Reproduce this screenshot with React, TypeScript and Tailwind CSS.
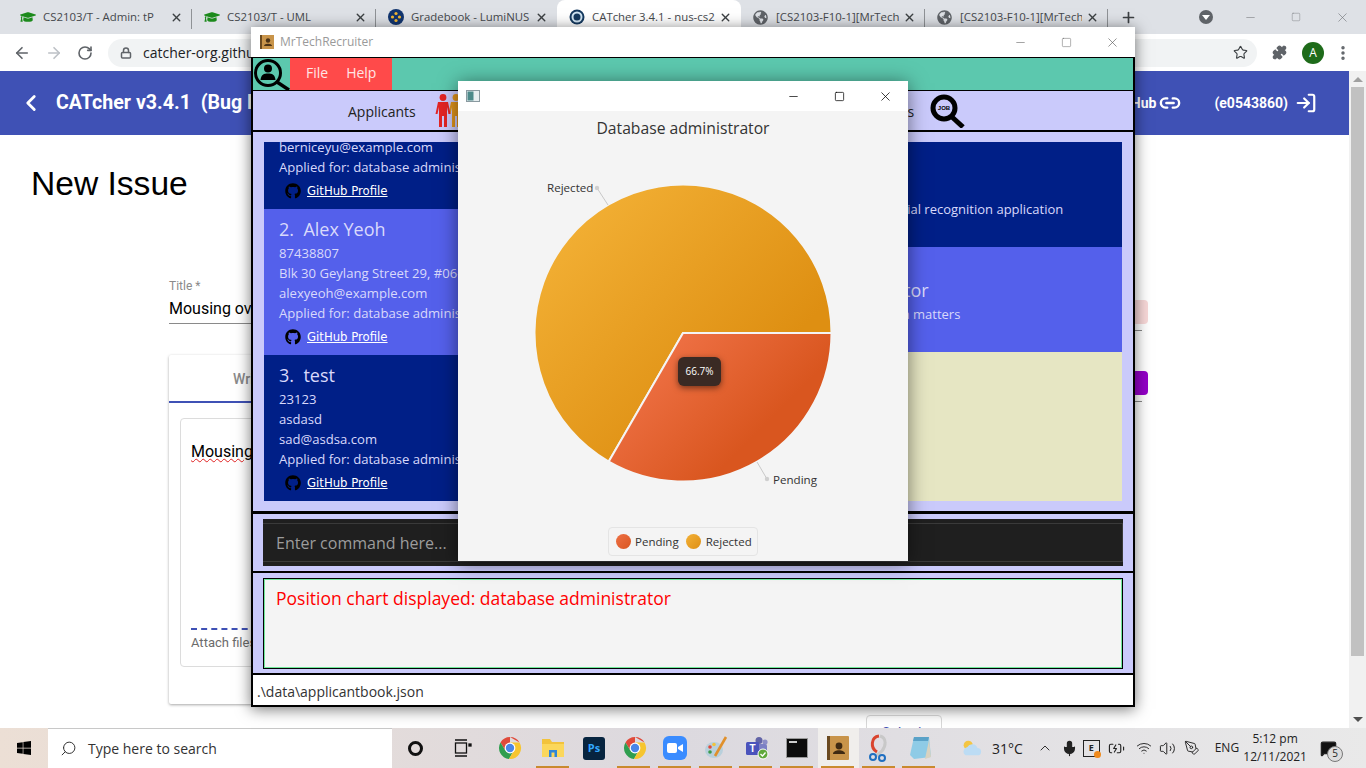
import { ArrowLeft, ArrowRight, RotateCw, Lock, Star, Puzzle, X, Plus, Minus, Square, ChevronLeft, Link2, LogIn, Search, EllipsisVertical, ChevronUp, Mic, Volume2, Wifi, PenTool, BatteryCharging, MessageSquare } from 'lucide-react';
import { FaGithub, FaGraduationCap, FaGlobeAmericas, FaWindows } from 'react-icons/fa';

const segoe = { fontFamily: '"Open Sans", "Noto Sans", sans-serif' };

const tabs = [
  { title: 'CS2103/T - Admin: tP', icon: 'grad', w: 'w-[184px]', sep: true },
  { title: 'CS2103/T - UML', icon: 'grad', w: 'w-[184px]', sep: true },
  { title: 'Gradebook - LumiNUS', icon: 'nus', w: 'w-[181px]', sep: false },
  { title: 'CATcher 3.4.1 - nus-cs2', icon: 'cat', w: 'w-[184px]', active: true, sep: false },
  { title: '[CS2103-F10-1][MrTech', icon: 'globe', w: 'w-[184px]', sep: true },
  { title: '[CS2103-F10-1][MrTech', icon: 'globe', w: 'w-[183px]', sep: true },
];

function TabIcon({ kind }: { kind: string }) {
  if (kind === 'grad') return <FaGraduationCap className="h-[16px] w-[16px] text-[#1c8a1c]" />;
  if (kind === 'globe') return <FaGlobeAmericas className="h-[15px] w-[15px] text-[#5f6368]" />;
  if (kind === 'nus')
    return (
      <svg viewBox="0 0 16 16" className="h-[16px] w-[16px]">
        <circle cx="8" cy="8" r="8" fill="#12356f" />
        <circle cx="8" cy="4.5" r="1.6" fill="#f2b632" />
        <circle cx="4.5" cy="8" r="1.6" fill="#f2b632" />
        <circle cx="11.5" cy="8" r="1.6" fill="#f2b632" />
        <circle cx="8" cy="11.5" r="1.6" fill="#f2b632" />
      </svg>
    );
  return (
    <svg viewBox="0 0 16 16" className="h-[16px] w-[16px]">
      <circle cx="8" cy="8" r="7.5" fill="#14395f" />
      <circle cx="8" cy="8" r="4.5" fill="none" stroke="#cfe3f2" strokeWidth="2" />
    </svg>
  );
}

function ChromeTabs() {
  return (
    <div className="flex h-[34px] items-end bg-[#dee1e6] pl-[8px] text-[11.4px] text-[#45484c]" style={segoe}>
      {tabs.map((t, i) => (
        <div
          key={i}
          className={`relative flex h-[34px] shrink-0 items-center pl-[11px] pr-[9px] ${t.w} ${t.active ? 'rounded-t-[8px] bg-white' : ''}`}
        >
          <span className="flex w-[17px] justify-center">
            <TabIcon kind={t.icon} />
          </span>
          <span className="ml-[7px] flex-1 overflow-hidden whitespace-nowrap">{t.title}</span>
          <X className="ml-[4px] h-[13px] w-[13px] shrink-0 text-[#3c4043]" strokeWidth={2.6} />
          {t.sep && <span className="absolute right-0 top-[9px] h-[20px] w-px bg-[#8f9296]" />}
        </div>
      ))}
      <div className="flex h-[34px] w-[40px] shrink-0 items-center justify-center">
        <Plus className="h-[17px] w-[17px] text-[#3c4043]" strokeWidth={2.4} />
      </div>
      <div className="ml-[48px] flex h-[34px] w-[20px] shrink-0 items-center justify-center">
        <span className="flex h-[14px] w-[14px] items-center justify-center rounded-full bg-[#5f6368]">
          <span className="h-0 w-0 border-x-[4px] border-t-[5px] border-x-transparent border-t-white" />
        </span>
      </div>
      <div className="ml-[11px] flex h-[34px] shrink-0 items-center text-[#6f7276]">
        <span className="flex w-[46px] justify-center"><Minus className="h-[13px] w-[13px]" strokeWidth={1} /></span>
        <span className="flex w-[46px] justify-center"><Square className="h-[10px] w-[10px]" strokeWidth={1} /></span>
        <span className="flex w-[46px] justify-center"><X className="h-[15px] w-[15px]" strokeWidth={1} /></span>
      </div>
    </div>
  );
}

function ChromeToolbar() {
  return (
    <div className="flex h-[37px] items-center bg-white" style={segoe}>
      <div className="flex w-[108px] items-center pl-[13px] text-[#5f6368]">
        <ArrowLeft className="h-[18px] w-[18px]" strokeWidth={2.2} />
        <ArrowRight className="ml-[14px] h-[18px] w-[18px] text-[#bdc1c6]" strokeWidth={2.2} />
        <RotateCw className="ml-[14px] h-[16px] w-[16px]" strokeWidth={2.4} />
      </div>
      <div className="flex h-[28px] w-[1149px] items-center rounded-full bg-[#f1f3f4] pl-[12px] pr-[9px] text-[14px] text-[#202124]">
        <Lock className="h-[12px] w-[12px] text-[#5f6368]" strokeWidth={3} />
        <span className="ml-[11px] flex-1">catcher-org.github.io</span>
        <Star className="h-[15px] w-[15px] text-[#3c4043]" strokeWidth={1.8} />
      </div>
      <Puzzle className="ml-[15px] h-[15px] w-[15px] fill-[#5f6368] text-[#5f6368]" />
      <span className="ml-[15px] flex h-[22px] w-[22px] items-center justify-center rounded-full bg-[#1e6b1a] text-[12px] text-white">A</span>
      <EllipsisVertical className="ml-[10px] h-[18px] w-[18px] text-[#5f6368]" strokeWidth={2.6} />
    </div>
  );
}

function PageBehind() {
  return (
    <div className="flex h-[657px] overflow-hidden bg-white">
      <div className="w-[1349px]" style={{ fontFamily: 'Roboto, sans-serif' }}>
        <header className="flex h-[64px] items-center bg-[#3f51b5] pl-[18px] text-white">
          <ChevronLeft className="h-[26px] w-[26px]" strokeWidth={2.6} />
          <span className="ml-[12px] text-[19.6px] font-bold">CATcher v3.4.1&nbsp; (Bug Reporting Phase)</span>
          <span className="ml-auto text-[14px] font-bold">GitHub</span>
          <Link2 className="ml-[3px] h-[22px] w-[22px]" strokeWidth={2.6} />
          <span className="ml-[33px] text-[14px] font-bold">(e0543860)</span>
          <LogIn className="ml-[7px] mr-[32px] h-[22px] w-[22px]" strokeWidth={2.4} />
        </header>
        <h1 className="ml-[31px] mt-[29px] text-[33.6px] leading-[40px] text-black" style={{ fontFamily: '"Liberation Sans", sans-serif' }}>New Issue</h1>
        <div className="ml-[169px] mt-[75px] flex w-[979px] justify-between">
          <div className="w-[800px]">
            <div className="text-[12px] leading-[14px] text-[#8a8a8a]">Title *</div>
            <div className="mt-[6px] h-[25px] border-b border-[#8a8a8a] text-[16px] leading-[20px] text-black">Mousing over the issue</div>
            <div className="mt-[31px] h-[349px] rounded-[2px] shadow-[0_1px_3px_rgba(0,0,0,0.35)]">
              <div className="h-[48px] w-[150px] border-b-2 border-[#3f51b5] pl-[64px] pt-[14px] text-[14px] font-medium text-[#8a8a8a]">Write</div>
              <div className="mx-[11px] mt-[15px] h-[249px] rounded-[4px] border border-[#dcdcdc] px-[10px] pt-[23px]">
                <div className="text-[16px] leading-[20px] text-black underline decoration-wavy decoration-[#e02020] decoration-1">Mousing</div>
                <div className="mt-[166px] w-[300px] border-b-2 border-dashed border-[#3f51b5]" />
                <div className="mt-[5px] text-[13px] leading-[16px] text-[#6b6b6b]">Attach files</div>
              </div>
            </div>
            <div className="ml-[697px] mt-[11px] h-[40px] w-[76px] rounded-[4px] border border-[#d8d8d8] pt-[7px] text-center text-[14px] text-[#3f51b5]">Submit</div>
          </div>
          <div className="w-[80px] pt-[7px]">
            <div className="h-[14px]" />
            <div className="ml-auto h-[24px] w-[60px] rounded-[4px] bg-[#f8d8d8]" />
            <div className="mt-[6px] h-px w-[74px] bg-[#8a8a8a]" />
            <div className="mt-[40px] ml-auto h-[24px] w-[60px] rounded-[4px] bg-[#9400c8]" />
            <div className="mt-[6px] h-px w-[74px] bg-[#8a8a8a]" />
          </div>
        </div>
      </div>
      <div className="relative w-[17px] bg-[#f1f1f1]">
        <span className="absolute left-[4px] top-[6px] h-0 w-0 border-x-[5px] border-b-[5px] border-x-transparent border-b-[#a0a0a0]" />
        <div className="ml-[2px] mt-[16px] h-[569px] w-[13px] bg-[#c1c1c1]" />
        <span className="absolute bottom-[6px] left-[4px] h-0 w-0 border-x-[5px] border-t-[5px] border-x-transparent border-t-[#505050]" />
      </div>
    </div>
  );
}

function LogoIcon() {
  return (
    <svg viewBox="0 0 38 33" className="h-[33px] w-[38px]">
      <circle cx="15" cy="15" r="12.5" fill="none" stroke="#000" strokeWidth="3" />
      <circle cx="15" cy="10.5" r="4" fill="#000" />
      <path d="M7.5 22 C8 16.5 11 15.5 15 15.5 C19 15.5 22 16.5 22.5 22 Z" fill="#000" />
      <path d="M24 24 L36 32" stroke="#000" strokeWidth="3.4" />
    </svg>
  );
}

function Person({ color }: { color: string }) {
  return (
    <g fill={color}>
      <circle cx="8" cy="3.5" r="3.4" />
      <path d="M3 8 h10 l2.5 12 h-2 l-1.5 -7 v20 h-3 v-11 h-2 v11 h-3 v-20 l-1.5 7 h-2 z" />
    </g>
  );
}

function PeopleIcon() {
  return (
    <svg viewBox="0 0 30 33" className="h-[33px] w-[30px]">
      <g transform="translate(13 0)"><Person color="#e2951c" /></g>
      <Person color="#e32424" />
    </svg>
  );
}

function JobIcon() {
  return (
    <svg viewBox="0 0 36 34" className="h-[34px] w-[36px]">
      <circle cx="14" cy="14" r="11" fill="none" stroke="#000" strokeWidth="5" />
      <text x="14" y="16" textAnchor="middle" fontSize="6" fontWeight="700" fill="#000" fontFamily="Liberation Sans, sans-serif">JOB</text>
      <path d="M22 23 L33 33" stroke="#000" strokeWidth="5" />
    </svg>
  );
}

function GithubLink() {
  return (
    <div className="mt-[2px] flex h-[24px] items-center pl-[6px]">
      <FaGithub className="h-[16px] w-[16px] text-black" />
      <span className="ml-[6px] text-[11.7px] text-white underline" style={{ fontFamily: '"DejaVu Sans", sans-serif' }}>GitHub Profile</span>
    </div>
  );
}

const applicants = [
  { no: '2.', name: 'Alex Yeoh', phone: '87438807', addr: 'Blk 30 Geylang Street 29, #06-40', mail: 'alexyeoh@example.com', bg: 'bg-[#5460eb]' },
  { no: '3.', name: 'test', phone: '23123', addr: 'asdasd', mail: 'sad@asdsa.com', bg: 'bg-[#001f87]' },
];

function ApplicantCard({ a }: { a: (typeof applicants)[number] }) {
  return (
    <div className={`h-[146px] pl-[15px] pt-[7px] text-[13.1px] leading-[20px] text-[#d9d9fb] ${a.bg}`}>
      <div className="text-[18px] leading-[27px]">{a.no}&nbsp; {a.name}</div>
      <div>{a.phone}</div>
      <div>{a.addr}</div>
      <div>{a.mail}</div>
      <div>Applied for: database administrator</div>
      <GithubLink />
    </div>
  );
}

function MainWindow() {
  return (
    <div className="absolute left-[251px] top-[27px] flex h-[680px] w-[884px] flex-col bg-white shadow-[0_2px_14px_rgba(0,0,0,0.55)]" style={segoe}>
      <div className="flex h-[30px] items-center pl-[9px] text-[12px] text-[#9a9a9a]">
        <svg viewBox="0 0 14 14" className="h-[14px] w-[14px]">
          <rect width="14" height="14" fill="#c8944a" />
          <rect x="0" width="2" height="14" fill="#6b4a20" />
          <circle cx="8" cy="5.5" r="2.2" fill="#4a3216" />
          <path d="M4 11 C4 8 12 8 12 11 Z" fill="#4a3216" />
        </svg>
        <span className="ml-[6px]">MrTechRecruiter</span>
        <div className="ml-auto flex items-center text-[#555]">
          <span className="flex w-[46px] justify-center"><Minus className="h-[13px] w-[13px]" strokeWidth={1} /></span>
          <span className="flex w-[46px] justify-center"><Square className="h-[11px] w-[11px]" strokeWidth={1} /></span>
          <span className="flex w-[46px] justify-center"><X className="h-[15px] w-[15px]" strokeWidth={1} /></span>
        </div>
      </div>
      <div className="flex min-h-0 flex-1 flex-col border-x-2 border-b-2 border-black">
        <div className="flex h-[34px] border-y border-black bg-[#5cc8ae]">
          <div className="w-[37px]"><LogoIcon /></div>
          <div className="flex w-[102px] items-center bg-[#ff4a4a] pb-[3px] pl-[16px] text-[14px] text-[#ffe5e5]">
            <span>File</span>
            <span className="ml-[18px]">Help</span>
          </div>
        </div>
        <div className="flex h-[41px] items-center border-b-2 border-black bg-[#cacafb] text-[14px] text-[#222]">
          <div className="flex w-1/2 items-center pl-[95px]">
            <span className="pt-[2px]">Applicants</span>
            <span className="ml-[19px]"><PeopleIcon /></span>
          </div>
          <div className="flex w-1/2 items-center pl-[162px]">
            <span className="pt-[2px]">Positions</span>
            <span className="ml-[16px]"><JobIcon /></span>
          </div>
        </div>
        <div className="flex h-[382px] gap-[4px] border-b-[3px] border-black bg-[#cacafb] px-[11px] pt-[10px]">
          <div className="h-[359px] w-[429px] overflow-hidden bg-[#001f87]">
            <div className="flex h-[67px] flex-col pl-[15px] text-[13.1px] leading-[20px] text-[#d9d9fb]">
              <div className="-mt-[5px]">berniceyu@example.com</div>
              <div>Applied for: database administrator</div>
              <GithubLink />
            </div>
            {applicants.map((a) => (
              <ApplicantCard key={a.no} a={a} />
            ))}
          </div>
          <div className="flex h-[359px] flex-1 flex-col text-[13px] text-[#d9d9fb]">
            <div className="h-[105px] bg-[#001f87] pl-[15px] pt-[57px] leading-[20px]">Work on and maintain a new facial recognition application</div>
            <div className="h-[105px] bg-[#5460eb] pl-[15px] pt-[30px] leading-[20px]">
              <div className="pl-[18px] text-[18px] leading-[27px]">Database administrator</div>
              <div className="pl-[3px]">Handle all database information matters</div>
            </div>
            <div className="flex-1 bg-[#e6e6c3]" />
          </div>
        </div>
        <div className="h-[59px] border-b-2 border-black bg-[#cacafb] px-[10px] pt-[5px]">
          <div className="h-[47px] bg-[#1f1f1f] py-[4px]">
            <div className="flex h-[39px] items-center border-y border-r border-[#3a3a3a] pl-[13px] text-[16px] text-[#9c9c9c]">Enter command here...</div>
          </div>
        </div>
        <div className="h-[102px] border-b-2 border-black bg-[#cacafb] px-[10px] pt-[5px]">
          <div className="h-[91px] border border-black">
            <div className="h-full border border-[#6fe89a] bg-[#f4f4f4] pl-[11px] pt-[5px] text-[17.5px] leading-[26px] text-[#ff0000]">Position chart displayed: database administrator</div>
          </div>
        </div>
        <div className="flex flex-1 items-center bg-white pl-[4px] pt-[3px] text-[14px] text-[#333]">.\data\applicantbook.json</div>
      </div>
    </div>
  );
}

function ChartWindow() {
  return (
    <div className="absolute left-[458px] top-[81px] h-[480px] w-[450px] bg-[#f4f4f4] shadow-[0_2px_18px_rgba(0,0,0,0.5)]" style={segoe}>
      <div className="flex h-[30px] items-center bg-white pl-[8px]">
        <svg viewBox="0 0 14 12" className="h-[12px] w-[14px]">
          <rect x="0.5" y="0.5" width="13" height="11" fill="#e8eef0" stroke="#8a9aa0" />
          <rect x="1.5" y="1.5" width="6" height="9" fill="#4d8a8a" />
        </svg>
        <div className="ml-auto flex items-center text-black">
          <span className="flex w-[46px] justify-center"><Minus className="h-[13px] w-[13px]" strokeWidth={1.3} /></span>
          <span className="flex w-[46px] justify-center"><Square className="h-[11px] w-[11px]" strokeWidth={1.6} /></span>
          <span className="flex w-[46px] justify-center"><X className="h-[15px] w-[15px]" strokeWidth={1.2} /></span>
        </div>
      </div>
      <div className="h-[34px] text-center text-[15.7px] leading-[34px] text-[#333]">Database administrator</div>
      <svg viewBox="458 145 450 380" className="block h-[380px] w-[450px]">
        <defs>
          <linearGradient id="rejected" gradientUnits="userSpaceOnUse" x1="560" y1="210" x2="740" y2="390">
            <stop offset="0" stopColor="#f3b136" />
            <stop offset="1" stopColor="#de8f12" />
          </linearGradient>
          <linearGradient id="pending" gradientUnits="userSpaceOnUse" x1="660" y1="350" x2="750" y2="440">
            <stop offset="0" stopColor="#ee7044" />
            <stop offset="1" stopColor="#d9561f" />
          </linearGradient>
        </defs>
        <path d="M683 333 L608.75 461.6 A148.5 148.5 0 1 1 831.5 333 Z" fill="url(#rejected)" stroke="#f4f4f4" strokeWidth="2" strokeLinejoin="round" />
        <path d="M683 333 L831.5 333 A148.5 148.5 0 0 1 608.75 461.6 Z" fill="url(#pending)" stroke="#f4f4f4" strokeWidth="2" strokeLinejoin="round" />
        <path d="M597 188 L608 205" stroke="#c8c8c8" strokeWidth="1" />
        <circle cx="597" cy="188" r="2.2" fill="#cfcfcf" />
        <text x="547" y="192" fontSize="11.6" fill="#333">Rejected</text>
        <path d="M757 462 L767 479" stroke="#c8c8c8" strokeWidth="1" />
        <circle cx="767" cy="479" r="2.2" fill="#cfcfcf" />
        <text x="773" y="484" fontSize="11.6" fill="#333">Pending</text>
      </svg>
      <div className="absolute left-[220px] top-[276px] flex h-[29px] w-[43px] items-center justify-center rounded-[6px] bg-[#3a2a24] text-[10px] text-white shadow-[0_2px_6px_rgba(0,0,0,0.5)]">66.7%</div>
      <div className="absolute left-[150px] top-[446px] flex h-[29px] w-[150px] items-center rounded-[4px] border border-[#e4e4e4] pl-[7px] text-[11.5px] text-[#333]">
        <span className="h-[15px] w-[15px] rounded-full bg-linear-to-br from-[#ee7044] to-[#d9561f]" />
        <span className="ml-[4px]">Pending</span>
        <span className="ml-[7px] h-[15px] w-[15px] rounded-full bg-linear-to-br from-[#f3b136] to-[#de8f12]" />
        <span className="ml-[5px]">Rejected</span>
      </div>
    </div>
  );
}

function ChromeLogo() {
  return (
    <svg viewBox="0 0 24 24" className="h-[24px] w-[24px]">
      <path d="M12 1 A11 11 0 0 1 21.5 6.5 L12 6.5 Z M12 1 A11 11 0 0 0 2.5 6.5 L7 14 L12 6.5 H21.5 Z" fill="#e04a3a" />
      <path d="M2.5 6.5 A11 11 0 0 0 11 23 L15.5 15 L7 14 Z" fill="#2f9e4f" />
      <path d="M21.5 6.5 A11 11 0 0 1 11 23 L15.5 15 L12 6.5 Z" fill="#f6c52f" />
      <circle cx="12" cy="12" r="5.4" fill="#fff" />
      <circle cx="12" cy="12" r="4.2" fill="#4a86e8" />
    </svg>
  );
}

const taskIcons = [
  { key: 'cortana', on: false, w: 'w-[47px]' },
  { key: 'view', on: false, w: 'w-[47px]' },
  { key: 'chrome1', on: false, w: 'w-[47px]' },
  { key: 'folder', on: true, w: 'w-[40.7px]' },
  { key: 'ps', on: false, w: 'w-[40.7px]' },
  { key: 'chrome2', on: true, w: 'w-[40.7px]' },
  { key: 'zoom', on: true, w: 'w-[40.7px]' },
  { key: 'paint', on: true, w: 'w-[40.7px]' },
  { key: 'teams', on: true, w: 'w-[40.7px]' },
  { key: 'cmd', on: true, w: 'w-[40.7px]' },
  { key: 'book', on: true, w: 'w-[40.7px]' },
  { key: 'snip', on: true, w: 'w-[40.7px]' },
  { key: 'note', on: true, w: 'w-[40.7px]' },
];

function TaskIcon({ k }: { k: string }) {
  switch (k) {
    case 'cortana':
      return <span className="h-[15px] w-[15px] rounded-full border-[3px] border-[#111]" />;
    case 'view':
      return (
        <svg viewBox="0 0 18 18" className="h-[18px] w-[18px]" fill="none" stroke="#111" strokeWidth="1.3">
          <path d="M1 1 H13 M1 17 H13" />
          <rect x="1.5" y="4" width="11" height="10" />
          <rect x="15" y="5" width="2" height="2" fill="#111" />
        </svg>
      );
    case 'chrome1':
    case 'chrome2':
      return <ChromeLogo />;
    case 'folder':
      return (
        <svg viewBox="0 0 24 24" className="h-[24px] w-[24px]">
          <path d="M1 3 H9 L11 6 H23 V21 H1 Z" fill="#f2c33c" />
          <path d="M1 8 H23 V21 H1 Z" fill="#fbd75b" />
          <path d="M8 21 V14 H16 V21 H13.5 V16.5 H10.5 V21 Z" fill="#2f86d8" />
        </svg>
      );
    case 'ps':
      return <span className="flex h-[23px] w-[22px] items-center justify-center rounded-[3px] bg-[#07243f] text-[11px] font-bold text-[#31a8ff]">Ps</span>;
    case 'zoom':
      return (
        <span className="flex h-[24px] w-[24px] items-center justify-center rounded-[6px] bg-[#3a8cff]">
          <svg viewBox="0 0 16 10" className="h-[10px] w-[16px]" fill="#fff">
            <rect width="10" height="10" rx="2" />
            <path d="M11 4 L16 1 V9 L11 6 Z" />
          </svg>
        </span>
      );
    case 'paint':
      return (
        <svg viewBox="0 0 24 24" className="h-[24px] w-[24px]">
          <ellipse cx="10" cy="14" rx="9" ry="8" fill="#b9d0dc" />
          <circle cx="6" cy="11" r="1.8" fill="#e0483c" />
          <circle cx="10" cy="8.5" r="1.8" fill="#f2c33c" />
          <circle cx="6" cy="16" r="1.8" fill="#3a9a4c" />
          <path d="M22 1 L11 20" stroke="#e0902c" strokeWidth="2.6" />
        </svg>
      );
    case 'teams':
      return (
        <svg viewBox="0 0 24 24" className="h-[24px] w-[24px]">
          <circle cx="14" cy="4.5" r="3.5" fill="#6264a7" />
          <circle cx="20" cy="6" r="2.6" fill="#8b8cc7" />
          <rect x="9" y="8" width="13" height="11" rx="2" fill="#7b7fc4" />
          <rect x="1" y="6" width="13" height="13" rx="1.5" fill="#4b53bc" />
          <text x="7.5" y="16" textAnchor="middle" fontSize="10" fontWeight="700" fill="#fff" fontFamily="Liberation Sans, sans-serif">T</text>
          <circle cx="18" cy="18" r="5" fill="#5fa83a" stroke="#fff" strokeWidth="1" />
          <path d="M15.5 18 L17.5 20 L20.5 16.5" stroke="#fff" strokeWidth="1.3" fill="none" />
        </svg>
      );
    case 'cmd':
      return (
        <span className="h-[20px] w-[22px] border border-[#999] bg-[#0c0c0c] pl-[2px] pt-[2px]">
          <span className="block h-[2px] w-[8px] bg-[#ccc]" />
        </span>
      );
    case 'book':
      return (
        <svg viewBox="0 0 22 24" className="h-[24px] w-[22px]">
          <rect width="22" height="24" rx="1" fill="#c8944a" />
          <rect width="3" height="24" fill="#6b4a20" />
          <circle cx="12" cy="10" r="3.4" fill="#3f2a12" />
          <path d="M6 18 C6 13 18 13 18 18 Z" fill="#3f2a12" />
        </svg>
      );
    case 'snip':
      return (
        <svg viewBox="0 0 24 28" className="h-[28px] w-[24px]" fill="none">
          <path d="M12 2 C4 3 3 14 10 18" stroke="#d9442e" strokeWidth="3" />
          <path d="M13 2 C20 4 19 12 15 17 L9 22" stroke="#c8c8c8" strokeWidth="3" />
          <circle cx="6" cy="23" r="3" stroke="#1f6fc0" strokeWidth="2" />
          <circle cx="15" cy="24" r="3" stroke="#1f6fc0" strokeWidth="2" />
        </svg>
      );
    default:
      return (
        <svg viewBox="0 0 24 26" className="h-[26px] w-[24px]">
          <path d="M6 2 H21 L23 22 L6 24 L2 20 Z" fill="#8ecbe6" />
          <path d="M6 2 H21 L20 6 H5 Z" fill="#5aa2c8" />
          <path d="M17 24 L23 22 L21 5 Z" fill="#d8d2c0" />
        </svg>
      );
  }
}

function Taskbar() {
  return (
    <div className="flex h-[40px] items-stretch bg-linear-to-r from-[#ecdfd5] via-[#dcd9df] to-[#e9e9e9] text-[#222]" style={segoe}>
      <div className="flex w-[48px] items-center justify-center">
        <FaWindows className="h-[16px] w-[16px] text-black" />
      </div>
      <div className="flex w-[344px] items-center border-t border-[#c8c8c8] bg-white pl-[12px] text-[14px] text-[#333]">
        <Search className="h-[17px] w-[17px] -scale-x-100" strokeWidth={1.4} />
        <span className="ml-[11px]">Type here to search</span>
      </div>
      <div className="flex">
        {taskIcons.map((t) => (
          <div
            key={t.key}
            className={`relative flex items-center justify-center ${t.w} ${t.key === 'book' ? 'bg-[#f0eeec]' : ''}`}
          >
            <TaskIcon k={t.key} />
            {t.on && <span className="absolute bottom-0 left-[3px] h-[2px] w-[33px] bg-[#c98a2e]" />}
          </div>
        ))}
      </div>
      <div className="flex flex-1 items-center pl-[20px] text-[14px]">
        <svg viewBox="0 0 24 20" className="h-[20px] w-[22px]">
          <circle cx="9" cy="7" r="5" fill="#f4c542" />
          <path d="M6 18 A5 5 0 0 1 8 9 A6 6 0 0 1 19 10 A4 4 0 0 1 19 18 Z" fill="#bcdcf4" />
        </svg>
        <span className="ml-[10px]">31°C</span>
        <ChevronUp className="ml-[14px] h-[16px] w-[16px]" strokeWidth={1.4} />
        <Mic className="ml-[8px] h-[17px] w-[17px] fill-[#222]" strokeWidth={1.6} />
        <span className="relative ml-[5px] flex h-[17px] w-[17px] items-center justify-center border border-[#222] text-[9px] font-bold">
          E
          <span className="absolute -bottom-[2px] -right-[2px] h-[7px] w-[7px] rounded-full bg-[#f08a1c]" />
        </span>
        <BatteryCharging className="ml-[8px] h-[17px] w-[17px]" strokeWidth={1.6} />
        <Wifi className="ml-[11px] h-[16px] w-[16px]" strokeWidth={1.4} />
        <Volume2 className="ml-[7px] h-[17px] w-[17px]" strokeWidth={1.4} />
        <PenTool className="ml-[8px] h-[16px] w-[16px]" strokeWidth={1.4} />
        <span className="ml-[15px] text-[12px]">ENG</span>
        <div className="ml-[4px] w-[64px] text-center text-[12px] leading-[18px]">
          <div>5:12 pm</div>
          <div>12/11/2021</div>
        </div>
        <span className="relative ml-[13px]">
          <MessageSquare className="h-[17px] w-[17px] fill-[#111]" />
          <span className="absolute -bottom-[5px] left-[7px] flex h-[16px] w-[16px] items-center justify-center rounded-full border border-[#777] bg-[#ddd] text-[10px]">5</span>
        </span>
      </div>
    </div>
  );
}

export default function App() {
  return (
    <div className="relative h-[768px] w-[1366px] overflow-hidden bg-white">
      <ChromeTabs />
      <ChromeToolbar />
      <PageBehind />
      <Taskbar />
      <MainWindow />
      <ChartWindow />
    </div>
  );
}
